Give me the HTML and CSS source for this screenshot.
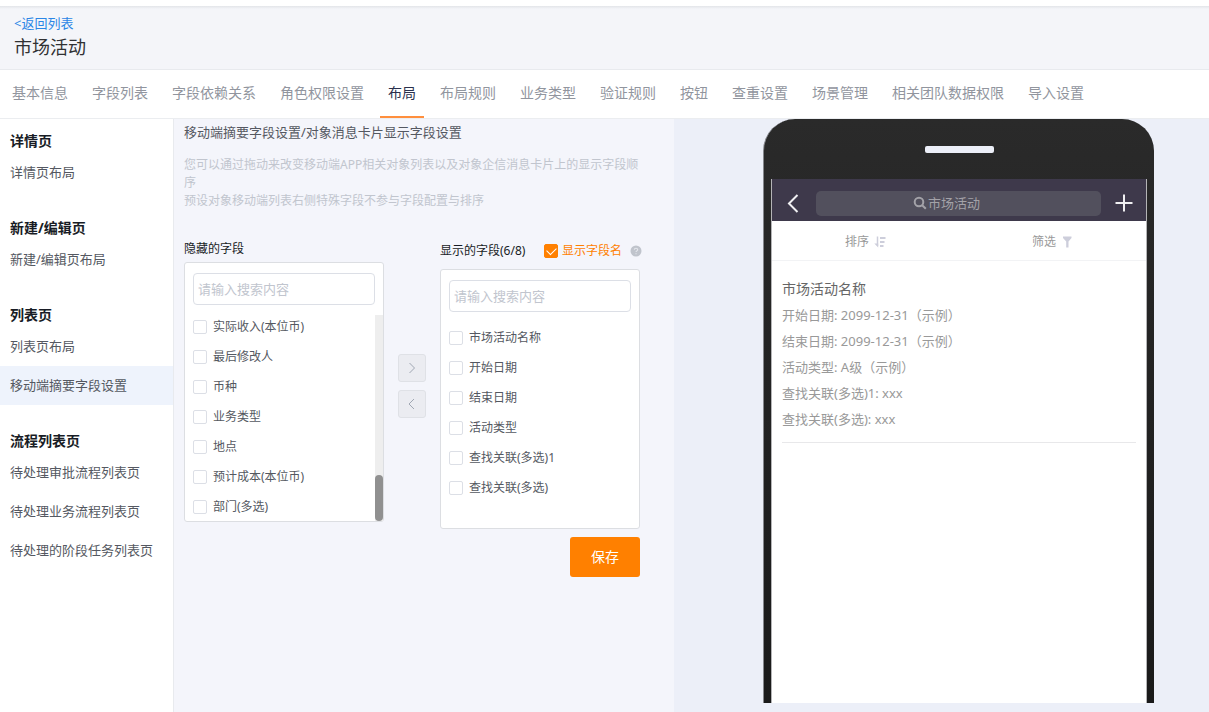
FILE: index.html
```html
<!DOCTYPE html>
<html lang="zh-CN">
<head>
<meta charset="utf-8">
<title>市场活动</title>
<link rel="stylesheet" href="styles.css">
</head>
<body>
<div class="topbar"></div>
<header class="page-head">
  <a class="back" href="#">&lt;返回列表</a>
  <h1 class="page-title">市场活动</h1>
</header>
<nav class="tabs">
  <a class="tab" href="#">基本信息</a>
  <a class="tab" href="#">字段列表</a>
  <a class="tab" href="#">字段依赖关系</a>
  <a class="tab" href="#">角色权限设置</a>
  <a class="tab tab-active" href="#">布局</a>
  <a class="tab" href="#">布局规则</a>
  <a class="tab" href="#">业务类型</a>
  <a class="tab" href="#">验证规则</a>
  <a class="tab" href="#">按钮</a>
  <a class="tab" href="#">查重设置</a>
  <a class="tab" href="#">场景管理</a>
  <a class="tab" href="#">相关团队数据权限</a>
  <a class="tab" href="#">导入设置</a>
</nav>
<div class="body">
  <aside class="side">
    <section class="side-group">
      <h2 class="side-head">详情页</h2>
      <a class="side-item" href="#">详情页布局</a>
    </section>
    <section class="side-group">
      <h2 class="side-head">新建/编辑页</h2>
      <a class="side-item" href="#">新建/编辑页布局</a>
    </section>
    <section class="side-group">
      <h2 class="side-head">列表页</h2>
      <a class="side-item" href="#">列表页布局</a>
      <a class="side-item side-item-active" href="#">移动端摘要字段设置</a>
    </section>
    <section class="side-group">
      <h2 class="side-head">流程列表页</h2>
      <a class="side-item" href="#">待处理审批流程列表页</a>
      <a class="side-item" href="#">待处理业务流程列表页</a>
      <a class="side-item" href="#">待处理的阶段任务列表页</a>
    </section>
  </aside>
  <main class="config">
    <h2 class="config-title">移动端摘要字段设置/对象消息卡片显示字段设置</h2>
    <p class="config-desc">您可以通过拖动来改变移动端APP相关对象列表以及对象企信消息卡片上的显示字段顺序<br>预设对象移动端列表右侧特殊字段不参与字段配置与排序</p>
    <div class="transfer">
      <section class="col">
        <h3 class="col-head">隐藏的字段</h3>
        <div class="panel">
          <input class="search" type="text" placeholder="请输入搜索内容" aria-label="搜索隐藏的字段">
          <div class="scroll">
            <div class="list list-scrolled">
              <label class="row"><input class="check" type="checkbox">实际收入(本位币)</label>
              <label class="row"><input class="check" type="checkbox">最后修改人</label>
              <label class="row"><input class="check" type="checkbox">币种</label>
              <label class="row"><input class="check" type="checkbox">业务类型</label>
              <label class="row"><input class="check" type="checkbox">地点</label>
              <label class="row"><input class="check" type="checkbox">预计成本(本位币)</label>
              <label class="row"><input class="check" type="checkbox">部门(多选)</label>
            </div>
            <div class="track"><div class="thumb"></div></div>
          </div>
        </div>
      </section>
      <div class="moves">
        <button class="move" type="button" aria-label="移到显示的字段"><svg width="10" height="14" viewBox="0 0 10 14"><path d="M2.500 2l5 5-5 5"/></svg></button>
        <button class="move" type="button" aria-label="移到隐藏的字段"><svg width="10" height="14" viewBox="0 0 10 14"><path d="M7 2L2 7l5 5"/></svg></button>
      </div>
      <section class="col">
        <div class="col-head col-head-shown">
          <h3 class="col-name">显示的字段(6/8)</h3>
          <label class="show-name"><input class="check" type="checkbox" checked>显示字段名</label>
          <svg class="help" width="12" height="12" viewBox="0 0 12 12"><circle cx="6" cy="6" r="5.500" fill="#c0c4cc"/><path d="M4.300 4.800c0-2.200 3.400-2.100 3.400-.1 0 1.100-1.700 1.200-1.700 2.400M6 8.200v1" fill="none" stroke="#e4e6ec" stroke-width="1.100"/></svg>
        </div>
        <div class="panel">
          <input class="search" type="text" placeholder="请输入搜索内容" aria-label="搜索显示的字段">
          <div class="list">
            <label class="row"><input class="check" type="checkbox">市场活动名称</label>
            <label class="row"><input class="check" type="checkbox">开始日期</label>
            <label class="row"><input class="check" type="checkbox">结束日期</label>
            <label class="row"><input class="check" type="checkbox">活动类型</label>
            <label class="row"><input class="check" type="checkbox">查找关联(多选)1</label>
            <label class="row"><input class="check" type="checkbox">查找关联(多选)</label>
          </div>
        </div>
      </section>
    </div>
    <div class="actions"><button class="save" type="button">保存</button></div>
  </main>
  <section class="stage">
    <div class="phone">
      <div class="phone-top"><div class="speaker"></div></div>
      <div class="screen">
        <div class="app-bar">
          <button class="app-btn" type="button" aria-label="返回"><svg width="20" height="20" viewBox="0 0 20 20"><path d="M14.500 2L6 10.500l8.500 8.500"/></svg></button>
          <button class="app-search" type="button"><svg width="14" height="14" viewBox="0 0 14 14"><circle cx="6" cy="6" r="4.300"/><path d="M9.200 9.200l3.600 3.600"/></svg>市场活动</button>
          <button class="app-btn" type="button" aria-label="新建"><svg width="20" height="20" viewBox="0 0 20 20"><path d="M10 1.500v17M1.500 10h17"/></svg></button>
        </div>
        <div class="filters">
          <button class="filter" type="button">排序<svg width="12" height="12" viewBox="0 0 12 12"><path d="M3.500 .5v9.500" stroke="#cdcedb" stroke-width="1.500"/><path d="M.3 7.500h3.900v4z" fill="#cdcedb"/><path d="M6 2h5.500M6 6h4.500M6 10h3.500" stroke="#cdcedb" stroke-width="1.800"/></svg></button>
          <button class="filter" type="button">筛选<svg width="12" height="12" viewBox="0 0 12 12"><path d="M2 .5h8.500v1.500L7.500 5.500v6H5.200v-6L2 2z" fill="#cdcedb"/></svg></button>
        </div>
        <div class="card">
          <h3 class="card-title">市场活动名称</h3>
          <p class="card-row">开始日期: 2099-12-31（示例）</p>
          <p class="card-row">结束日期: 2099-12-31（示例）</p>
          <p class="card-row">活动类型: A级（示例）</p>
          <p class="card-row">查找关联(多选)1: xxx</p>
          <p class="card-row">查找关联(多选): xxx</p>
        </div>
      </div>
    </div>
  </section>
</div>
</body>
</html>
```
FILE: styles.css
```css
* { box-sizing: border-box; }
body, h1, h2, h3, p { margin: 0; }
h1, h2, h3 { font-weight: 400; }
a { text-decoration: none; color: inherit; }
button, input { font: inherit; margin: 0; }
button { padding: 0; cursor: pointer; }
body {
  min-height: 100vh;
  display: flex;
  flex-direction: column;
  background: #fff;
  color: #545861;
  font-family: "Noto Sans", "Noto Sans CJK SC", sans-serif;
  font-size: 12px;
  line-height: 18px;
}
.topbar { height: 6px; }
.page-head {
  height: 64px;
  padding: 7px 14px 0;
  border-bottom: 1px solid #e8eaee;
  background: linear-gradient(#e3e5e9, #f4f5f9 3px);
}
.back { display: block; width: max-content; font-size: 13px; line-height: 20px; color: #2b86e6; }
.page-title { font-size: 18px; line-height: 28px; color: #303133; }

.tabs {
  display: flex;
  gap: 8px;
  height: 49px;
  padding: 0 4px;
  border-bottom: 1px solid #ebedf0;
  font-size: 14px;
  line-height: 46px;
  color: #91959e;
  white-space: nowrap;
}
.tab { padding: 0 8px; }
.tab-active { color: #2a304d; border-bottom: 2px solid #ff8f3d; }

.body { flex: 1; display: flex; }
.side {
  flex: none;
  width: 174px;
  padding-top: 10px;
  border-right: 1px solid #e8eaee;
  background: #fff;
}
.side-group { margin-bottom: 24px; }
.side-head { padding-left: 10px; font-size: 14px; font-weight: 700; line-height: 24px; color: #181c25; }
.side-item { display: block; padding-left: 10px; font-size: 13px; line-height: 39px; }
.side-item-active { background: #eef3fc; }

.config { flex: none; width: 500px; padding: 4px 34px 0 10px; background: #f4f5fb; }
.config-title { font-size: 13px; line-height: 18px; }
.config-desc { margin-top: 15px; color: #c1c5ce; }
.transfer { display: flex; align-items: flex-start; margin-top: 23px; }
.col { width: 200px; }
.col-head { height: 26px; margin-top: 3px; font-size: 12px; line-height: 26px; color: #181c25; }
.col-head-shown { display: flex; align-items: center; height: 36px; margin-top: 0; white-space: nowrap; }
.col-name { width: 104px; flex: none; font-size: 12px; }
.show-name { display: flex; align-items: center; gap: 4px; margin-right: 8px; color: #ff8000; }
.help { flex: none; }
.panel {
  display: flex;
  flex-direction: column;
  gap: 10px;
  height: 260px;
  padding-top: 10px;
  border: 1px solid #dcdee2;
  border-radius: 3px;
  background: #fff;
}
.search {
  height: 32px;
  flex: none;
  margin: 0 8px;
  padding: 0 4px;
  border: 1px solid #dcdfe6;
  border-radius: 4px;
  background: #fff;
  font-size: 13px;
}
.search::placeholder { color: #c1c5ce; opacity: 1; }
.scroll { display: flex; flex: 1; min-height: 0; }
.list { flex: 1; display: flex; flex-direction: column; padding-left: 8px; }
.list-scrolled { justify-content: flex-end; overflow: hidden; }
.row { display: flex; flex: none; align-items: center; gap: 6px; height: 30px; padding-top: 2px; }
.track { display: flex; align-items: flex-end; width: 8px; background: #eee; }
.thumb { width: 8px; height: 46px; border-radius: 4px; background: #909090; }
.check {
  appearance: none;
  flex: none;
  width: 14px;
  height: 14px;
  border: 1px solid #dcdfe6;
  border-radius: 2px;
  background: #fff;
}
.check:checked { display: grid; place-items: center; border-color: #ff8000; background: #ff8000; }
.check:checked::after {
  content: "";
  width: 8px;
  height: 5px;
  margin-bottom: 3px;
  border: solid #fff;
  border-width: 0 0 1px 1px;
  transform: rotate(-45deg);
}
.moves { align-self: center; display: flex; flex-direction: column; align-items: center; gap: 8px; width: 56px; padding-top: 10px; }
.move {
  display: grid;
  place-items: center;
  width: 28px;
  height: 28px;
  border: 1px solid #dfe1e6;
  border-radius: 3px;
  background: #ebecf1;
}
.move svg { fill: none; stroke: #a0a7b3; stroke-width: 1; }
.actions { display: flex; justify-content: flex-end; margin-top: 8px; }
.save { width: 70px; height: 40px; border: 0; border-radius: 3px; background: #ff8000; color: #fff; font-size: 14px; }

.stage { flex: 1; display: flex; padding: 0 55px 9px 89px; background: #eceff8; }
.phone {
  flex: 1;
  display: flex;
  flex-direction: column;
  padding: 0 7px;
  border-left: 1px solid #85878c;
  border-radius: 32px 32px 0 0;
  background: linear-gradient(#2a2a2a, #1a1a1a);
}
.phone-top { display: flex; justify-content: center; height: 60px; padding-top: 27px; }
.speaker { width: 69px; height: 7px; border-radius: 2px; background: #eceff8; }
.screen { flex: 1; background: #fff; border: solid #b4b4b6; border-width: 0 1px; }
.app-bar { display: flex; align-items: center; justify-content: space-between; height: 42px; padding: 6px 12px 0 11px; gap: 13px; background: #3e394b; }
.app-btn { width: 20px; height: 20px; border: 0; background: none; }
.app-btn svg { display: block; fill: none; stroke: #f0f0f2; stroke-width: 2; }
.app-search {
  flex: 1;
  display: flex;
  align-items: center;
  justify-content: center;
  gap: 1px;
  height: 25px;
  padding-right: 24px;
  border: 0;
  border-radius: 5px;
  background: #52505d;
  color: #a3a2a8;
  font-size: 13px;
}
.app-search svg { fill: none; stroke: #a3a2a8; stroke-width: 2; }
.filters { display: flex; height: 40px; padding-top: 2px; border-bottom: 1px solid #f2f3f5; }
.filter { flex: 1; display: flex; align-items: center; justify-content: center; gap: 5px; border: 0; background: none; color: #999; }
.filter svg { fill: none; }
.card { margin: 0 10px; padding: 14px 0 10px; border-bottom: 1px solid #e8e8ea; }
.card-title { font-size: 14px; line-height: 27px; color: #666; }
.card-row { font-size: 13px; line-height: 26px; color: #999; }
```
